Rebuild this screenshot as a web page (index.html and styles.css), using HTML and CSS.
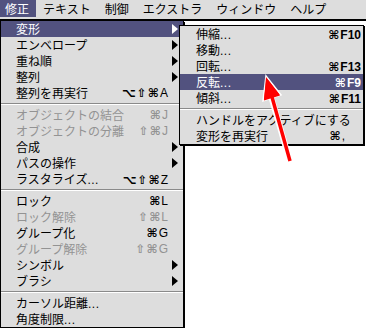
FILE: index.html
```html
<!DOCTYPE html>
<html lang="ja">
<head>
<meta charset="utf-8">
<link rel="stylesheet" href="styles.css">
</head>
<body>
<div class="menubar">
  <span class="mb-item active first">修正</span>
  <span class="mb-item">テキスト</span>
  <span class="mb-item">制御</span>
  <span class="mb-item">エクストラ</span>
  <span class="mb-item">ウィンドウ</span>
  <span class="mb-item">ヘルプ</span>
</div>
<div class="desk">
  <div class="menu main">
    <div class="row hl"><span class="lbl">変形</span><span class="key"></span><span class="sub"></span></div>
    <div class="row"><span class="lbl">エンベロープ</span><span class="key"></span><span class="sub"></span></div>
    <div class="row"><span class="lbl">重ね順</span><span class="key"></span><span class="sub"></span></div>
    <div class="row"><span class="lbl">整列</span><span class="key"></span><span class="sub"></span></div>
    <div class="row"><span class="lbl">整列を再実行</span><span class="key"><span class="sym">⌥⇧⌘</span>A</span><span></span></div>
    <div class="sep"></div>
    <div class="row dis"><span class="lbl">オブジェクトの結合</span><span class="key"><span class="sym">⌘</span>J</span><span></span></div>
    <div class="row dis"><span class="lbl">オブジェクトの分離</span><span class="key"><span class="sym">⇧⌘</span>J</span><span></span></div>
    <div class="row"><span class="lbl">合成</span><span class="key"></span><span class="sub"></span></div>
    <div class="row"><span class="lbl">パスの操作</span><span class="key"></span><span class="sub"></span></div>
    <div class="row"><span class="lbl">ラスタライズ<span class="dots">...</span></span><span class="key"><span class="sym">⌥⇧⌘</span>Z</span><span></span></div>
    <div class="sep"></div>
    <div class="row"><span class="lbl">ロック</span><span class="key"><span class="sym">⌘</span>L</span><span></span></div>
    <div class="row dis"><span class="lbl">ロック解除</span><span class="key"><span class="sym">⇧⌘</span>L</span><span></span></div>
    <div class="row"><span class="lbl">グループ化</span><span class="key"><span class="sym">⌘</span>G</span><span></span></div>
    <div class="row dis"><span class="lbl">グループ解除</span><span class="key"><span class="sym">⇧⌘</span>G</span><span></span></div>
    <div class="row"><span class="lbl">シンボル</span><span class="key"></span><span class="sub"></span></div>
    <div class="row"><span class="lbl">ブラシ</span><span class="key"></span><span class="sub"></span></div>
    <div class="sep"></div>
    <div class="row"><span class="lbl">カーソル距離<span class="dots">...</span></span><span class="key"></span><span></span></div>
    <div class="row"><span class="lbl">角度制限<span class="dots">...</span></span><span class="key"></span><span></span></div>
  </div>

  <div class="menu submenu">
    <div class="row"><span class="lbl">伸縮<span class="dots">...</span></span><span class="key bold"><span class="sym">⌘</span>F10</span></div>
    <div class="row"><span class="lbl">移動<span class="dots">...</span></span><span class="key bold"></span></div>
    <div class="row"><span class="lbl">回転<span class="dots">...</span></span><span class="key bold"><span class="sym">⌘</span>F13</span></div>
    <div class="row hl"><span class="lbl">反転<span class="dots">...</span></span><span class="key bold"><span class="sym">⌘</span>F9</span></div>
    <div class="row"><span class="lbl">傾斜<span class="dots">...</span></span><span class="key bold"><span class="sym">⌘</span>F11</span></div>
    <div class="sep"></div>
    <div class="row"><span class="lbl">ハンドルをアクティブにする</span><span class="key"></span></div>
    <div class="row"><span class="lbl">変形を再実行</span><span class="key wide"><span class="sym">⌘</span>,</span></div>
  </div>

  <svg class="pointer" width="366" height="328" viewBox="0 0 366 328" aria-hidden="true">
    <line x1="290" y1="162" x2="271" y2="96" stroke="#ffffff" stroke-width="6"/>
    <polygon points="266,76 281,95 263,101" fill="#ff0000" stroke="#ffffff" stroke-width="1.5" stroke-linejoin="miter"/>
    <line x1="290" y1="161" x2="272" y2="97" stroke="#ff0000" stroke-width="3.5"/>
    <polygon points="266,77 280,95.5 264,100.5" fill="#ff0000"/>
  </svg>
</div>
</body>
</html>
```

FILE: styles.css
```css
* { box-sizing: border-box; }

html, body {
  margin: 0;
  padding: 0;
  background: #ffffff;
}

body {
  width: 366px;
  height: 328px;
  overflow: hidden;
  font-family: "Noto Sans CJK JP", "Noto Sans", sans-serif;
  font-size: 12px;
  color: #000;
  position: relative;
}

.menubar {
  display: flex;
  align-items: flex-start;
  height: 20px;
  background: #dddddd;
  border-bottom: 1px solid #000;
}

.mb-item {
  height: 17px;
  line-height: 17px;
  padding: 0 7px;
  white-space: nowrap;
}

.mb-item.first { padding-left: 5px; }

.mb-item.active {
  background: #52527f;
  color: #fff;
}

.desk {
  position: relative;
  border-top: 1px solid #000;
  height: 308px;
}

.menu {
  background: #dddddd;
  border: 1px solid #000;
  box-shadow: 1px 1px 0 #000;
}

.main {
  width: 184px;
  border-top: none;
}

.submenu {
  position: absolute;
  left: 179px;
  top: 4px;
  width: 185px;
}

.row {
  display: grid;
  align-items: center;
  height: 16px;
  line-height: 16px;
  white-space: nowrap;
}

.main .row {
  grid-template-columns: 1fr auto 15px;
  padding-left: 15px;
}

.submenu .row {
  grid-template-columns: 1fr auto;
  padding-left: 16px;
  padding-right: 2px;
}

.row.hl {
  background: #52527f;
  color: #fff;
}

.row.dis { color: #939393; }

.dots {
  font-family: "Liberation Sans", Arial, sans-serif;
  letter-spacing: 0.5px;
}

.key {
  font-family: "Liberation Sans", Arial, sans-serif;
  font-size: 12px;
  text-align: right;
}

.key.bold { font-weight: bold; }
.key.wide { padding-right: 16px; }

.sym {
  font-family: "DejaVu Sans", sans-serif;
  font-weight: bold;
  font-size: 12px;
  letter-spacing: 1px;
}

.sub {
  display: flex;
  align-items: center;
  padding-left: 4px;
}

.sub::before {
  content: "";
  width: 0;
  height: 0;
  border-left: 6px solid currentColor;
  border-top: 5.5px solid transparent;
  border-bottom: 5.5px solid transparent;
}

.sep {
  height: 6px;
  position: relative;
}

.sep::before {
  content: "";
  position: absolute;
  left: 0;
  right: 0;
  top: 2px;
  height: 1px;
  background: #8a8a8a;
  box-shadow: 0 1px 0 #ffffff;
}

.pointer {
  position: absolute;
  left: 0;
  top: -21px;
  pointer-events: none;
}
```
